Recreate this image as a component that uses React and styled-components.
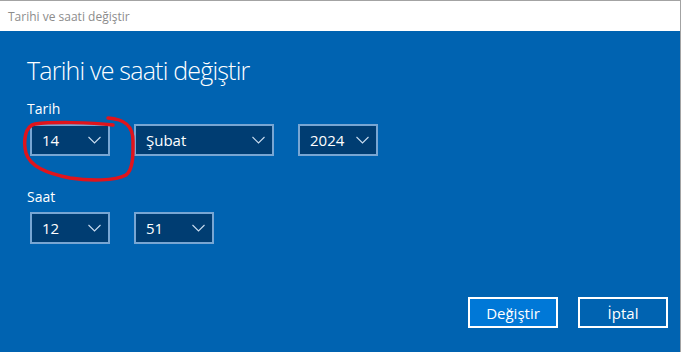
import React from "react";
import styled, { createGlobalStyle } from "styled-components";

const Global = createGlobalStyle`
  html, body {
    margin: 0;
    padding: 0;
    background: #ffffff;
  }
  body {
    font-family: "Open Sans", "Noto Sans", sans-serif;
  }
`;

const Window = styled.div`
  width: 681px;
  height: 352px;
  box-sizing: border-box;
  display: flex;
  flex-direction: column;
  border-top: 1px solid #a3a3a3;
  border-right: 1px solid #a3a3a3;
  overflow: hidden;
  position: relative;
`;

const TitleBar = styled.div`
  height: 30px;
  flex-shrink: 0;
  background: #ffffff;
  display: flex;
  align-items: center;
  padding-left: 8px;
  font-size: 12px;
  color: #8c8c8c;
`;

const Body = styled.div`
  flex: 1;
  background: #0063b1;
  color: #ffffff;
  padding: 22px 12px 0 27px;
  display: flex;
  flex-direction: column;
`;

const Heading = styled.h1`
  margin: 0;
  font-weight: 300;
  font-size: 25px;
  line-height: 34px;
  letter-spacing: -0.8px;
`;

const Group = styled.div`
  margin-top: ${(p) => p.top}px;
  display: flex;
  flex-direction: column;
`;

const Label = styled.div`
  font-size: 14px;
  line-height: 18px;
  margin-bottom: 6px;
`;

const Row = styled.div`
  display: flex;
  gap: 24px;
  padding-left: 3px;
`;

const Select = styled.div`
  width: ${(p) => p.w}px;
  height: 32px;
  box-sizing: border-box;
  border: 2px solid #78a6d3;
  background: #003d72;
  display: flex;
  align-items: center;
  justify-content: space-between;
  padding: 0 7px 0 10px;
  font-size: 15px;
  color: #ffffff;
`;

const Footer = styled.div`
  margin-top: auto;
  margin-bottom: 24px;
  display: flex;
  justify-content: flex-end;
  gap: 20px;
`;

const Button = styled.button`
  width: 90px;
  height: 31px;
  box-sizing: border-box;
  border: 2px solid #ffffff;
  background: ${(p) => (p.primary ? "#0078d7" : "transparent")};
  color: #ffffff;
  font-family: inherit;
  font-size: 15px;
  padding: 0;
`;

const Scribble = styled.svg`
  position: absolute;
  left: 0;
  top: 0;
  pointer-events: none;
`;

const Chevron = () => (
  <svg width="13" height="8" viewBox="0 0 13 8">
    <path d="M0.5 1 L6.5 7 L12.5 1" fill="none" stroke="#c9dcef" strokeWidth="1.1" />
  </svg>
);

const Dropdown = ({ value, w }) => (
  <Select w={w}>
    <span>{value}</span>
    <Chevron />
  </Select>
);

const App = () => {
  return (
    <>
      <Global />
      <Window>
        <TitleBar>Tarihi ve saati değiştir</TitleBar>
        <Body>
          <Heading>Tarihi ve saati değiştir</Heading>
          <Group top={13}>
            <Label>Tarih</Label>
            <Row>
              <Dropdown value="14" w={80} />
              <Dropdown value="Şubat" w={140} />
              <Dropdown value="2024" w={80} />
            </Row>
          </Group>
          <Group top={32}>
            <Label>Saat</Label>
            <Row>
              <Dropdown value="12" w={80} />
              <Dropdown value="51" w={80} />
            </Row>
          </Group>
          <Footer>
            <Button primary>Değiştir</Button>
            <Button>İptal</Button>
          </Footer>
        </Body>
        <Scribble width="681" height="352">
          <path
            d="M113 124 C90 121 50 121 35 123 C25 125 23 140 26 152 C30 165 45 172 70 177 C90 180 115 180 126 174 C134 168 133 150 133 140 C133 125 125 118 108 117"
            fill="none"
            stroke="#e0141c"
            strokeWidth="3.5"
            strokeLinecap="round"
          />
        </Scribble>
      </Window>
    </>
  );
};

export default App;
